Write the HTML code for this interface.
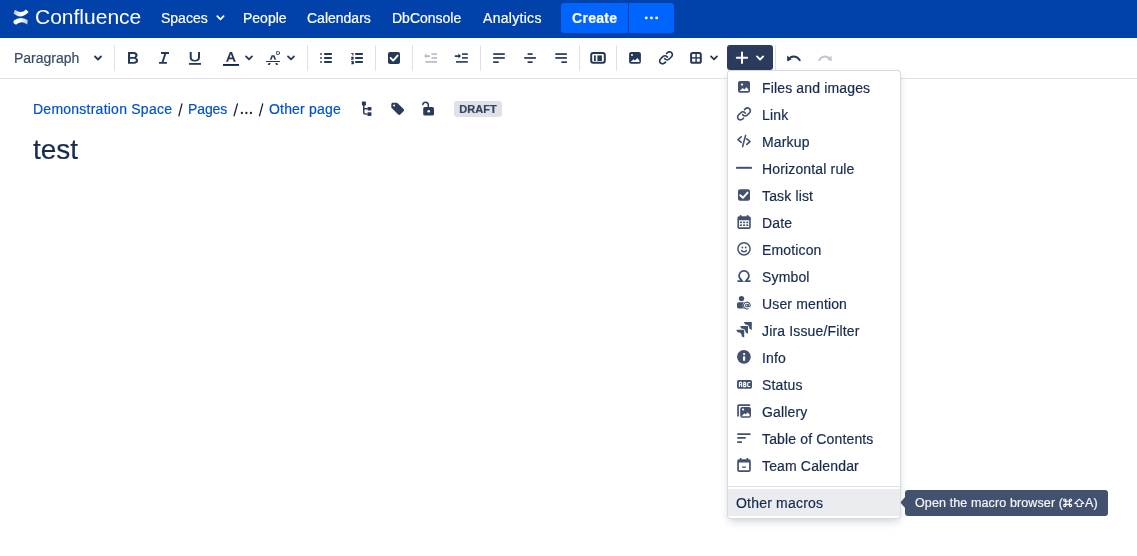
<!DOCTYPE html>
<html><head><meta charset="utf-8">
<style>
*{margin:0;padding:0;box-sizing:border-box}
html,body{width:1137px;height:556px;overflow:hidden;background:#fff;font-family:"Liberation Sans",sans-serif;color:#172B4D}
.a{position:absolute;white-space:nowrap;will-change:transform;-webkit-text-stroke:0.2px currentColor}
#hdr{position:absolute;left:0;top:0;width:1137px;height:38px;background:#0042A9}
.nav{position:absolute;top:10px;font-size:14px;line-height:16px;color:#fff}
#tb{position:absolute;left:0;top:38px;width:1137px;height:41px;border-bottom:1px solid #DFE1E6;background:#fff}
.sep{position:absolute;top:45px;width:1px;height:26px;background:#DFE1E6}
svg{position:absolute;overflow:visible}
.mi{position:absolute;left:762px;font-size:14px;line-height:16px;color:#172B4D;letter-spacing:0.15px}
.bc{position:absolute;top:101px;font-size:14px;line-height:16px;color:#0052CC}
.sl{color:#172B4D}
</style></head><body>
<div id="hdr"></div>
<!-- logo -->
<svg style="left:0;top:0" width="40" height="38" viewBox="0 0 40 38">
<defs><linearGradient id="lg1" x1="0" y1="0" x2="1" y2="0"><stop offset="0" stop-color="#b9c9e8"/><stop offset="0.55" stop-color="#fff"/></linearGradient>
<linearGradient id="lg2" x1="1" y1="0" x2="0" y2="0"><stop offset="0" stop-color="#b9c9e8"/><stop offset="0.55" stop-color="#fff"/></linearGradient></defs>
<path d="M15 9.8 Q21 14.5 26 9.6 L28.6 12 Q21 20 13.6 13.6 Z" fill="url(#lg1)"/>
<path d="M13.8 20.4 Q20.5 15.45 27.8 20.3 L27.2 24.6 Q21 19.9 16 24.8 L13.4 23 Z" fill="url(#lg2)"/>
</svg>
<div class="a" style="left:35px;top:5px;font-size:21px;line-height:24px;color:#fff;-webkit-text-stroke:0">Confluence</div>
<div class="nav a" style="left:161px">Spaces</div>
<svg style="left:216px;top:15px" width="10" height="7" viewBox="0 0 10 7"><path d="M1.3 1.2 L4.45 4.3 L7.6 1.2" stroke="#fff" stroke-width="1.8" fill="none" stroke-linecap="round" stroke-linejoin="round"/></svg>
<div class="nav a" style="left:243px">People</div>
<div class="nav a" style="left:307px">Calendars</div>
<div class="nav a" style="left:392px">DbConsole</div>
<div class="nav a" style="left:483px;letter-spacing:0.3px">Analytics</div>
<div class="a" style="left:561px;top:3px;width:67px;height:30px;background:#0065FF;border-radius:3px 0 0 3px"></div>
<div class="a" style="left:629px;top:3px;width:45px;height:30px;background:#0065FF;border-radius:0 3px 3px 0"></div>
<div class="a" style="left:572px;top:10px;font-size:14px;line-height:16px;color:#fff;font-weight:bold;letter-spacing:0.3px">Create</div>
<svg style="left:644px;top:16px" width="15" height="4" viewBox="0 0 15 4"><circle cx="2.25" cy="1.9" r="1.45" fill="#fff"/><circle cx="7.45" cy="1.9" r="1.45" fill="#fff"/><circle cx="12.65" cy="1.9" r="1.45" fill="#fff"/></svg>

<div id="tb"></div>
<div class="a" style="left:14px;top:50px;font-size:14px;line-height:16px;color:#3B4A66">Paragraph</div>
<svg style="left:94px;top:55px" width="8" height="6" viewBox="0 0 8 6"><path d="M1 1.5 L4 4.5 L7 1.5" stroke="#253858" stroke-width="1.8" fill="none" stroke-linecap="round" stroke-linejoin="round"/></svg>
<div class="sep" style="left:114px"></div>
<div class="sep" style="left:307px"></div>
<div class="sep" style="left:375px"></div>
<div class="sep" style="left:412px"></div>
<div class="sep" style="left:480px"></div>
<div class="sep" style="left:579px"></div>
<div class="sep" style="left:616px"></div>
<div class="sep" style="left:775px"></div>

<!-- toolbar icons: coordinates are absolute page coords -->
<svg style="left:0;top:0" width="1137" height="80" viewBox="0 0 1137 80">
<g fill="#253858" stroke="none">
<!-- Bold -->
<path d="M128 52 H133.5 C136.3 52 137.6 53.4 137.6 55.2 C137.6 56.5 136.9 57.3 136 57.7 C137.3 58.1 138.1 59.2 138.1 60.6 C138.1 62.5 136.6 63.8 133.9 63.8 H128 Z M130.1 53.9 V56.9 H133.3 C134.7 56.9 135.4 56.3 135.4 55.4 C135.4 54.5 134.7 53.9 133.3 53.9 Z M130.1 58.7 V61.9 H133.6 C135.1 61.9 135.9 61.3 135.9 60.3 C135.9 59.3 135.1 58.7 133.6 58.7 Z"/>
<!-- Italic -->
<path d="M161 52 H169 V53.9 H166.2 L163.6 62 H166.9 V63.8 H159 V62 H161.6 L164.2 53.9 H161 Z"/>
<!-- Underline -->
<path d="M189.7 52 H191.7 V57.6 C191.7 59.2 192.8 60.1 194.85 60.1 C196.9 60.1 198 59.2 198 57.6 V52 H200 V57.6 C200 60.3 198.1 61.6 194.85 61.6 C191.6 61.6 189.7 60.3 189.7 57.6 Z"/>
<rect x="189" y="63" width="12" height="1.8"/>
<!-- Text color A -->
<path d="M229.8 52.1 H232 L235.8 61.7 H233.7 L232.8 59.2 H229 L228.1 61.7 H226 Z M229.6 57.5 H232.2 L230.9 53.9 Z"/>
<rect x="223" y="64" width="16" height="1.9" fill="#0B2556"/>
<!-- text style -->
<path d="M271.6 55.2 H274.4 L276.2 59.7 H274.6 L273 56.2 L271.4 59.7 H269.8 Z"/>
<rect x="266" y="61" width="14" height="1"/>
<path d="M268.5 63.1 H270.6 L269.8 64.9 H267.8 Z M275.3 63.1 H277.3 L278 64.9 H276.1 Z"/>
<path d="M276.3 51.2 H278 C279.3 51.2 280.1 52 280.1 53 C280.1 54 279.3 54.8 278 54.8 H276.3 Z M277.2 52 V54 H278 C278.7 54 279.1 53.6 279.1 53 C279.1 52.4 278.7 52 278 52 Z"/>
<!-- bullet list -->
<rect x="320.1" y="53.1" width="1.8" height="1.8" fill="#4a5874"/><rect x="320.1" y="57.1" width="1.8" height="1.8" fill="#4a5874"/><rect x="320.1" y="61.1" width="1.8" height="1.8" fill="#4a5874"/>
<rect x="324" y="53" width="8" height="2" rx="0.8"/><rect x="324" y="57" width="8" height="2" rx="0.8"/><rect x="324" y="61" width="8" height="2" rx="0.8"/>
<!-- numbered -->
<g fill="none" stroke="#253858" stroke-width="1.1" stroke-linejoin="round">
<path d="M351.3 53.5 H352.9 V55.4"/>
<path d="M351.2 57.4 H353.4 L351.4 59.1 H353.7"/>
<path d="M351.2 61.5 H353.4 L352.2 62.6 C354.2 62.5 354.2 64.1 351.2 63.7"/>
</g>
<rect x="355" y="53" width="8" height="2" rx="0.8"/><rect x="355" y="57" width="8" height="2" rx="0.8"/><rect x="355" y="61" width="8" height="2" rx="0.8"/>
<!-- checkbox -->
<rect x="388" y="52" width="12" height="12" rx="2"/>
</g>
<path d="M390.6 58 L393.2 60.6 L397.6 55.6" stroke="#fff" stroke-width="1.9" fill="none" stroke-linecap="round" stroke-linejoin="round"/>
<!-- outdent grey -->
<g fill="#B3BAC5">
<rect x="431.4" y="53.3" width="5.6" height="1.6"/><rect x="431.4" y="57.1" width="5.6" height="1.6"/><rect x="425.3" y="61.1" width="11.7" height="1.6"/>
<path d="M424 56.1 L426.6 53.6 V55.3 H430 V56.9 H426.6 V58.6 Z"/>
</g>
<g fill="#253858">
<rect x="462" y="53.3" width="5.8" height="1.6"/><rect x="462" y="57.1" width="5.8" height="1.6"/><rect x="456" y="61.1" width="11.8" height="1.6"/>
<path d="M461 56.1 L458.4 53.6 V55.3 H454.8 V56.9 H458.4 V58.6 Z"/>
<!-- align left -->
<rect x="493.2" y="53.2" width="11.6" height="1.7"/><rect x="493.2" y="57.1" width="11.6" height="1.7"/><rect x="493.2" y="61.3" width="5.5" height="1.7"/>
<!-- center -->
<rect x="527.6" y="53.2" width="5" height="1.7"/><rect x="524.2" y="57.1" width="11.7" height="1.7"/><rect x="527.6" y="61.3" width="5" height="1.7"/>
<!-- right -->
<rect x="555.3" y="53.2" width="11.6" height="1.7"/><rect x="555.3" y="57.1" width="11.6" height="1.7"/><rect x="561.4" y="61.3" width="5.5" height="1.7"/>
<!-- layout -->
<rect x="591.2" y="53.1" width="13.6" height="9.6" rx="2" fill="none" stroke="#253858" stroke-width="2"/>
<rect x="594" y="55.4" width="1.8" height="5.6"/><rect x="597.4" y="55.4" width="4.5" height="5.6"/>
<!-- image -->
<path d="M631.1 52 H638.9 A2 2 0 0 1 640.9 54 V61.8 A2 2 0 0 1 638.9 63.8 H631.1 A2 2 0 0 1 629.1 61.8 V54 A2 2 0 0 1 631.1 52Z"/>
</g>
<circle cx="632" cy="55" r="1" fill="#fff"/>
<path d="M630.8 61.8 L633.6 59.2 L635 60.4 L637.3 58 L639.4 60.4 V62 H630.8Z" fill="#fff"/>
<!-- link -->
<g fill="#253858" transform="translate(656.4 47.85) scale(0.8)"><path d="M12.856 5.457l-.937.92a1.002 1.002 0 000 1.437 1.047 1.047 0 001.463 0l.984-.966c.967-.95 2.542-1.135 3.602-.288a2.54 2.54 0 01.203 3.81l-2.903 2.852a2.646 2.646 0 01-3.696 0l-1.11-1.09L9 13.57l1.108 1.089c1.822 1.788 4.802 1.788 6.622 0l2.905-2.852a4.558 4.558 0 00-.357-6.82c-1.893-1.517-4.695-1.226-6.422.47"/><path d="M11.144 19.543l.937-.92a1.002 1.002 0 000-1.437 1.047 1.047 0 00-1.462 0l-.985.966c-.967.95-2.542 1.135-3.602.288a2.54 2.54 0 01-.203-3.81l2.903-2.852a2.646 2.646 0 013.696 0l1.11 1.09L15 11.43l-1.108-1.089c-1.822-1.788-4.802-1.788-6.622 0l-2.905 2.852a4.558 4.558 0 00.357 6.82c1.893 1.517 4.695 1.226 6.422-.47"/></g>
<!-- table -->
<rect x="691.1" y="52.9" width="9.7" height="9.9" rx="1.6" fill="none" stroke="#253858" stroke-width="2"/>
<rect x="695.4" y="53" width="1.4" height="10" fill="#253858"/><rect x="691" y="57.2" width="10" height="1.4" fill="#253858"/>
<!-- chevrons -->
<g fill="none" stroke="#253858" stroke-width="1.8" stroke-linecap="round" stroke-linejoin="round">
<path d="M246 56.4 L249 59.4 L252 56.4"/>
<path d="M288 56.4 L291 59.4 L294 56.4"/>
<path d="M711 56.4 L714 59.4 L717 56.4"/>
</g>
<!-- plus button -->
<rect x="727" y="45" width="46" height="25" rx="3" fill="#2A3B5C"/>
<g fill="none" stroke="#fff" stroke-width="2" stroke-linecap="round" stroke-linejoin="round">
<path d="M742 52.6 V62.9 M736.8 57.8 H747.1"/>
<path d="M757 56.4 L760.1 59.5 L763.2 56.4" stroke-width="1.8"/>
</g>
<!-- undo / redo -->
<path d="M788.5 59.8 C790.5 55.6 796.4 55.2 799.8 60.2" fill="none" stroke="#253858" stroke-width="1.9" stroke-linecap="round"/>
<path d="M787 61.1 L787.3 55.6 L791.6 59.4 Z" fill="#253858"/>
<path d="M830.3 59.8 C828.3 55.6 822.4 55.2 819 60.2" fill="none" stroke="#C1C7D0" stroke-width="1.9" stroke-linecap="round"/>
<path d="M831.8 61.1 L831.5 55.6 L827.2 59.4 Z" fill="#C1C7D0"/>
</svg>

<!-- breadcrumbs -->
<div class="bc a" style="left:33px;letter-spacing:0.24px">Demonstration Space</div>
<div class="bc a" style="left:188px;letter-spacing:-0.1px">Pages</div>
<svg style="left:0;top:0" width="300" height="130" viewBox="0 0 300 130">
<g stroke="#1E2430" stroke-width="1.3" stroke-linecap="round">
<path d="M181.9 104 L178.9 115.8"/><path d="M237.4 104 L234.1 115.8"/><path d="M262.7 104 L259.5 115.8"/>
</g>
<g fill="#1E2430"><circle cx="241.9" cy="113" r="1.15"/><circle cx="246.4" cy="113" r="1.15"/><circle cx="250.9" cy="113" r="1.15"/></g>
</svg>
<div class="bc a" style="left:269px;letter-spacing:0.18px">Other page</div>
<svg style="left:0;top:0" width="520" height="130" viewBox="0 0 520 130">
<g fill="#2A3B5C">
<rect x="361.9" y="101.5" width="4.1" height="4.1" rx="0.8"/>
<rect x="367.4" y="107.1" width="4.1" height="3.5" rx="0.8"/>
<rect x="367.4" y="112.3" width="4.1" height="3.7" rx="0.8"/>
<path d="M363 105 H364.5 V108.1 H367.5 V109.5 H364.5 V112 C364.5 113 364.9 113.4 365.8 113.4 H367.5 V114.8 H365.6 C363.9 114.8 363 114 363 112.3 Z"/>
<!-- tag -->
<path d="M392.8 102.8 H396.4 C397 102.8 397.5 103 397.9 103.4 L403.6 109.1 C404.2 109.7 404.2 110.6 403.6 111.2 L400.3 114.5 C399.7 115.1 398.8 115.1 398.2 114.5 L392.4 108.7 C392 108.3 391.3 107.8 391.3 107.2 V104.3 C391.3 103.5 392 102.8 392.8 102.8Z"/>
<!-- lock -->
<rect x="423.2" y="107.1" width="10.8" height="8.5" rx="1.6"/>
</g>
<circle cx="394.1" cy="105.6" r="1" fill="#fff"/>
<circle cx="428.7" cy="111.2" r="1.3" fill="#fff"/>
<path d="M422.8 104.6 A2.8 2.8 0 0 1 428.3 104.6 V107.5" fill="none" stroke="#2A3B5C" stroke-width="1.5" stroke-linecap="round"/>
</svg>
<div class="a" style="left:454px;top:101px;width:48px;height:16px;background:#DFE1E6;border-radius:3px;font-size:11px;line-height:16px;font-weight:bold;color:#344563;text-align:center">DRAFT</div>
<div class="a" style="left:33px;top:134px;font-size:28px;line-height:32px;color:#172B4D">test</div>

<!-- menu -->
<div class="a" style="left:727px;top:70px;width:174px;height:449px;background:#fff;border:1px solid rgba(9,30,66,.16);border-radius:4px;box-shadow:0 4px 8px -2px rgba(9,30,66,.22)"></div>
<div class="mi a" style="top:80px">Files and images</div>
<div class="mi a" style="top:107px">Link</div>
<div class="mi a" style="top:134px">Markup</div>
<div class="mi a" style="top:161px">Horizontal rule</div>
<div class="mi a" style="top:188px">Task list</div>
<div class="mi a" style="top:215px">Date</div>
<div class="mi a" style="top:242px">Emoticon</div>
<div class="mi a" style="top:269px">Symbol</div>
<div class="mi a" style="top:296px">User mention</div>
<div class="mi a" style="top:323px">Jira Issue/Filter</div>
<div class="mi a" style="top:350px">Info</div>
<div class="mi a" style="top:377px">Status</div>
<div class="mi a" style="top:404px">Gallery</div>
<div class="mi a" style="top:431px">Table of Contents</div>
<div class="mi a" style="top:458px">Team Calendar</div>
<div class="a" style="left:728px;top:486px;width:172px;height:1px;background:#DFE1E6"></div>
<div class="a" style="left:728px;top:489px;width:172px;height:27px;background:#EBECF0"></div>
<div class="a" style="left:736px;top:495px;font-size:14px;line-height:16px;color:#172B4D;letter-spacing:0.2px">Other macros</div>

<!-- menu icons -->
<svg style="left:0;top:0" width="1137" height="556" viewBox="0 0 1137 556">
<g fill="#42526E">
<!-- files and images -->
<path d="M740 81.1 H748 A2 2 0 0 1 750 83.1 V90.8 A2 2 0 0 1 748 92.8 H740 A2 2 0 0 1 738 90.8 V83.1 A2 2 0 0 1 740 81.1Z"/>
<!-- hr -->
<rect x="736.1" y="166.8" width="15.8" height="2"/>
<!-- task -->
<rect x="738" y="189.2" width="12" height="11.6" rx="2"/>
<!-- date -->
<path d="M739.2 216.2 H748.9 A1.9 1.9 0 0 1 750.8 218.1 V227 A1.9 1.9 0 0 1 748.9 228.9 H739.3 A1.9 1.9 0 0 1 737.4 227 V218.1 A1.9 1.9 0 0 1 739.2 216.2Z M739 220.3 V227.3 H749.2 V220.3Z"/>
<rect x="739.8" y="215.1" width="1.6" height="2"/><rect x="746.8" y="215.1" width="1.6" height="2"/>
<rect x="739.9" y="221.6" width="2" height="1.6"/><rect x="743.1" y="221.6" width="2" height="1.6"/><rect x="746.3" y="221.6" width="2" height="1.6"/>
<rect x="739.9" y="224.4" width="2" height="1.6"/><rect x="743.1" y="224.4" width="2" height="1.6"/><rect x="746.3" y="224.4" width="2" height="1.6"/>
<!-- info -->
<circle cx="743.9" cy="356.8" r="6.9"/>
<!-- status -->
<rect x="737" y="380.1" width="15" height="8.6" rx="1.6"/>
<!-- gallery -->
<path d="M737.2 406 A1.7 1.7 0 0 1 738.9 404.3 H750.1 V406 H738.9 V416.4 H737.2Z"/>
<path d="M742.2 406.9 H749 A2 2 0 0 1 751 408.9 V415.7 A2 2 0 0 1 749 417.7 H742.2 A2 2 0 0 1 740.2 415.7 V408.9 A2 2 0 0 1 742.2 406.9Z"/>
<!-- toc -->
<rect x="737.2" y="433.3" width="13.4" height="1.7" rx="0.5"/><rect x="737.2" y="437.1" width="8.6" height="1.7" rx="0.5"/><rect x="737.2" y="441.2" width="4.8" height="1.7" rx="0.5"/>
<!-- team calendar -->
<path d="M739.1 459.3 H748.9 A1.9 1.9 0 0 1 750.8 461.2 V470.1 A1.9 1.9 0 0 1 748.9 472 H739.1 A1.9 1.9 0 0 1 737.2 470.1 V461.2 A1.9 1.9 0 0 1 739.1 459.3Z M738.9 462.6 V470.3 H749.1 V462.6Z"/>
<rect x="739.8" y="458" width="1.6" height="2"/><rect x="746.6" y="458" width="1.6" height="2"/>
<rect x="742.1" y="466.5" width="3.8" height="1.3"/>
<!-- user mention -->
<circle cx="741.5" cy="298.6" r="2.7"/>
<path d="M738.6 302.3 H744 C744 302.3 743.4 303.5 743.4 305.3 C743.4 307 744 308.4 744 308.4 H738.6 A1.6 1.6 0 0 1 737 306.8 V303.9 A1.6 1.6 0 0 1 738.6 302.3Z"/>
<!-- jira -->
<path d="M743.9 322 H751.8 V329.9 L749.4 328.7 Q749.4 324.4 745.1 324.4 Z"/>
<path d="M740.1 326 H748 V333.8 L745.6 332.6 Q745.6 328.4 741.3 328.4 Z"/>
<path d="M736.3 329.8 H744.2 V337.6 L741.8 336.4 Q741.8 332.2 737.5 332.2 Z"/>
</g>
<g fill="#fff">
<circle cx="742" cy="84.6" r="1.1"/>
<path d="M739.7 91.1 L742.7 88.1 L744.3 89.5 L746.5 87.3 L748.4 89.4 V91.1Z"/>
<path d="M740.2 195.2 L742.9 197.8 L747.6 192.6" stroke="#fff" stroke-width="1.9" fill="none" stroke-linecap="round" stroke-linejoin="round"/>
<circle cx="744.1" cy="354.1" r="1.1"/><rect x="743" y="356.2" width="2.2" height="4.6" rx="0.6"/>
<circle cx="743.1" cy="409.5" r="1.1"/>
<path d="M741.6 416.3 L744.3 413.3 L745.6 414.4 L747.6 412.4 L749.6 414.6 V416.3Z"/>
</g>
<g fill="none" stroke="#fff" stroke-width="1.1" stroke-linecap="butt">
<path d="M739.4 386.9 V383.1 Q739.4 382.1 740.55 382.1 Q741.7 382.1 741.7 383.1 V386.9 M739.4 384.7 H741.7"/>
<path d="M743.7 382.2 V386.6 H745.1 Q746 386.6 746 385.6 Q746 384.4 745 384.4 H743.7 M743.7 382.4 H744.9 Q745.8 382.4 745.8 383.4 Q745.8 384.4 744.9 384.4"/>
<path d="M750.3 382.5 H748.6 Q747.7 382.5 747.7 383.5 V385.5 Q747.7 386.5 748.6 386.5 H750.3"/>
</g>
<g fill="none" stroke="#42526E" stroke-linecap="round" stroke-linejoin="round">
<!-- link -->
</g><g fill="#42526E" transform="translate(734.4 103.9) scale(0.8)"><path d="M12.856 5.457l-.937.92a1.002 1.002 0 000 1.437 1.047 1.047 0 001.463 0l.984-.966c.967-.95 2.542-1.135 3.602-.288a2.54 2.54 0 01.203 3.81l-2.903 2.852a2.646 2.646 0 01-3.696 0l-1.11-1.09L9 13.57l1.108 1.089c1.822 1.788 4.802 1.788 6.622 0l2.905-2.852a4.558 4.558 0 00-.357-6.82c-1.893-1.517-4.695-1.226-6.422.47"/><path d="M11.144 19.543l.937-.92a1.002 1.002 0 000-1.437 1.047 1.047 0 00-1.462 0l-.985.966c-.967.95-2.542 1.135-3.602.288a2.54 2.54 0 01-.203-3.81l2.903-2.852a2.646 2.646 0 013.696 0l1.11 1.09L15 11.43l-1.108-1.089c-1.822-1.788-4.802-1.788-6.622 0l-2.905 2.852a4.558 4.558 0 00.357 6.82c1.893 1.517 4.695 1.226 6.422-.47"/></g><g fill="none" stroke="#42526E" stroke-linecap="round" stroke-linejoin="round">
<!-- markup -->
<path d="M741.2 136.8 L738 139.6 L741.2 142.4" stroke-width="1.6"/>
<path d="M746.8 138.8 L750 141.6 L746.8 144.4" stroke-width="1.6"/>
<path d="M745.6 135.4 L742.6 146.6" stroke-width="1.6"/>
<!-- emoticon -->
<circle cx="744" cy="248.8" r="6.1" stroke-width="1.5"/>
<path d="M741.6 250.5 C742.8 252.3 745.2 252.3 746.4 250.5" stroke-width="1.4"/>
<!-- symbol omega -->
<path d="M737.4 281.1 H742.2 L741.3 279.8 A4.9 4.9 0 1 1 746.7 279.8 L745.8 281.1 H750.6" stroke-width="1.8" stroke-linecap="butt" stroke-linejoin="miter"/>
<!-- @ -->
<circle cx="746.9" cy="305.5" r="3.6" stroke="#fff" stroke-width="1.4" fill="#fff"/>
<circle cx="746.9" cy="305.5" r="1.3" stroke-width="1.1"/>
<path d="M748.2 304.2 V306.1 C748.2 307 750.3 307.1 750.3 305.3 A3.4 3.4 0 1 0 748.2 308.7" stroke-width="1.1"/>
</g>
<circle cx="742.4" cy="247.5" r="0.9" fill="#42526E"/><circle cx="745.7" cy="247.5" r="0.9" fill="#42526E"/>
</svg>

<!-- tooltip -->
<div class="a" style="left:905px;top:490px;width:203px;height:26px;background:#42526E;border-radius:3px"></div>
<svg style="left:900px;top:496px" width="6" height="13" viewBox="0 0 6 13"><path d="M6 0 L1.2 5.5 Q0.2 6.5 1.2 7.5 L6 13Z" fill="#42526E"/></svg>
<div class="a" style="left:915px;top:496px;font-size:12.5px;line-height:14px;color:#F4F5F7;letter-spacing:0.12px">Open the macro browser (</div>
<svg style="left:0;top:0" width="1137" height="556" viewBox="0 0 1137 556">
<g fill="none" stroke="#F4F5F7" stroke-width="1.15">
<path d="M1064.5 501.2 H1070.8 M1064.5 504.4 H1070.8 M1065.9 499.8 V505.8 M1069.4 499.8 V505.8"/>
<circle cx="1064.75" cy="500.1" r="1.15"/><circle cx="1070.55" cy="500.1" r="1.15"/><circle cx="1064.75" cy="505.5" r="1.15"/><circle cx="1070.55" cy="505.5" r="1.15"/>
<path d="M1079.25 499.1 L1083.8 503.5 H1081.3 V506.5 H1077.2 V503.5 H1074.7 Z" stroke-width="1.1" stroke-linejoin="round"/>
</g>
</svg>
<div class="a" style="left:1085px;top:496px;font-size:12.5px;line-height:14px;color:#F4F5F7;letter-spacing:0.12px">A)</div>
</body></html>
